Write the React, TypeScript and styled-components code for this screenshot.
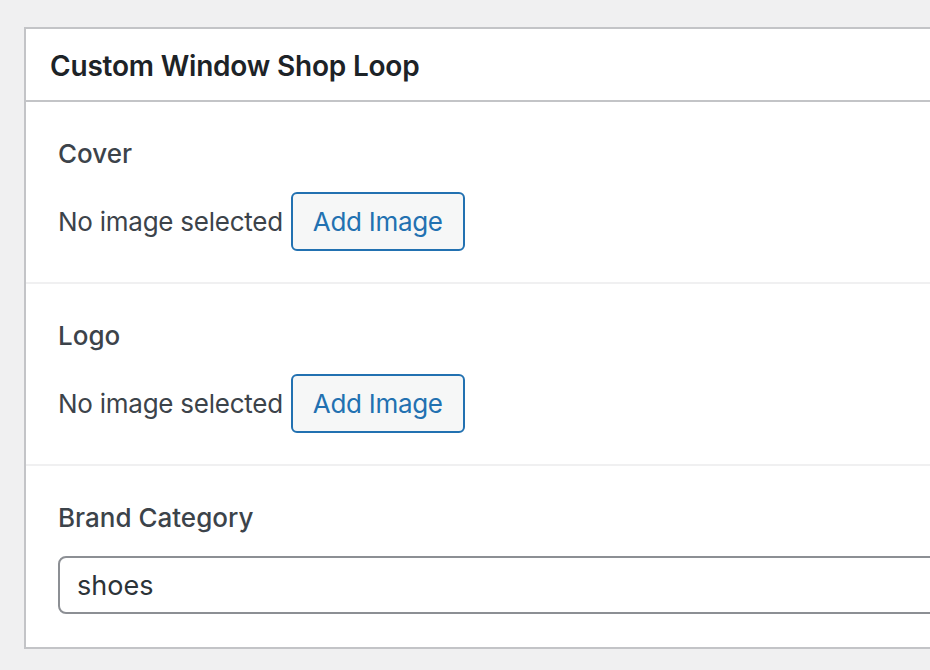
import { createGlobalStyle, styled } from "styled-components";

const GlobalStyle = createGlobalStyle`
  html, body {
    margin: 0;
    padding: 0;
    background: #f0f0f1;
    overflow: hidden;
    font-family: Inter, "Liberation Sans", sans-serif;
  }
`;

const Page = styled.div`
  padding: 27px 0 0 24px;
  width: 930px;
  height: 670px;
  box-sizing: border-box;
`;

const Postbox = styled.div`
  width: 1000px;
  background: #fff;
  border: 2px solid #c3c4c7;
  box-sizing: border-box;
`;

const Header = styled.div`
  height: 73px;
  display: flex;
  align-items: center;
  padding: 2px 24px 0;
  box-sizing: border-box;
  border-bottom: 2px solid #c3c4c7;
`;

const Title = styled.h2`
  margin: 0;
  font-size: 28px;
  font-weight: 600;
  color: #1d2327;
  letter-spacing: -0.2px;
`;

const Section = styled.div<{ $last?: boolean }>`
  padding: 34px 32px ${(p) => (p.$last ? "33px" : "31px")};
  border-bottom: ${(p) => (p.$last ? "none" : "2px solid #f0f0f1")};
  display: flex;
  flex-direction: column;
  gap: 20px;
`;

const Label = styled.label`
  display: block;
  line-height: 36px;
  height: 36px;
  font-size: 26px;
  font-weight: 500;
  color: #3c434a;
`;

const Row = styled.div`
  display: flex;
  align-items: center;
  gap: 8px;
  height: 59px;
`;

const Placeholder = styled.span`
  font-size: 26px;
  letter-spacing: -0.25px;
  color: #3c434a;
`;

const Button = styled.button`
  height: 59px;
  padding: 0 20px;
  border: 2px solid #2271b1;
  border-radius: 6px;
  background: #f6f7f7;
  color: #2271b1;
  font-family: inherit;
  font-size: 26px;
  letter-spacing: -0.3px;
  cursor: pointer;
`;

const Input = styled.input`
  width: 900px;
  height: 58px;
  padding: 0 17px;
  box-sizing: border-box;
  border: 2px solid #8c8f94;
  border-radius: 8px;
  font-family: inherit;
  font-size: 27px;
  color: #2c3338;
  outline: none;
`;

export default function App() {
  return (
    <Page>
      <GlobalStyle />
      <Postbox>
        <Header>
          <Title>Custom Window Shop Loop</Title>
        </Header>
        <Section>
          <Label>Cover</Label>
          <Row>
            <Placeholder>No image selected</Placeholder>
            <Button>Add Image</Button>
          </Row>
        </Section>
        <Section>
          <Label>Logo</Label>
          <Row>
            <Placeholder>No image selected</Placeholder>
            <Button>Add Image</Button>
          </Row>
        </Section>
        <Section $last>
          <Label>Brand Category</Label>
          <Input defaultValue="shoes" />
        </Section>
      </Postbox>
    </Page>
  );
}
